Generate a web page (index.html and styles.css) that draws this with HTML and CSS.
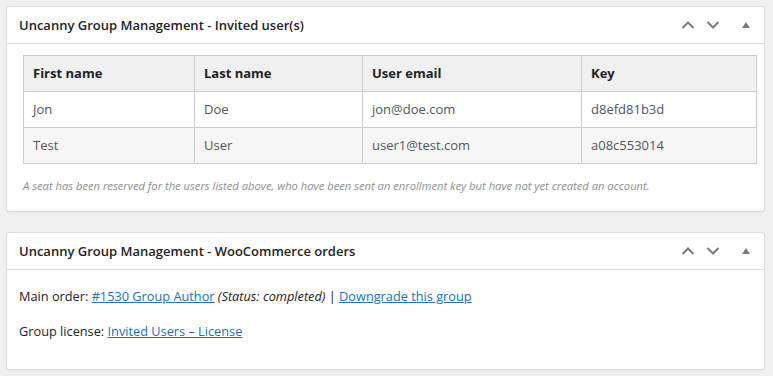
FILE: index.html
```html
<!DOCTYPE html>
<html lang="en">

<head>
    <meta charset="UTF-8">
    <title>Uncanny Group Management</title>
    <link rel="stylesheet" href="styles.css">
</head>

<body>
    <div class="postbox">
        <div class="postbox-header">
            <h2>Uncanny Group Management - Invited user(s)</h2>
            <div class="handle-actions">
                <button class="handle" aria-label="Move up">
                    <svg width="14" height="10" viewBox="0 0 14 10"><polyline points="1.5,8 7,2.5 12.5,8" /></svg>
                </button>
                <button class="handle" aria-label="Move down">
                    <svg width="14" height="10" viewBox="0 0 14 10"><polyline points="1.5,2 7,7.5 12.5,2" /></svg>
                </button>
                <button class="handle toggle" aria-label="Toggle panel">
                    <svg width="10" height="8" viewBox="0 0 10 8"><polygon points="5,1 9,7 1,7" /></svg>
                </button>
            </div>
        </div>
        <div class="inside inside-table">
            <table class="invited">
                <thead>
                    <tr>
                        <th class="col-first">First name</th>
                        <th class="col-last">Last name</th>
                        <th class="col-email">User email</th>
                        <th>Key</th>
                    </tr>
                </thead>
                <tbody>
                    <tr>
                        <td>Jon</td>
                        <td>Doe</td>
                        <td>jon@doe.com</td>
                        <td>d8efd81b3d</td>
                    </tr>
                    <tr class="alt">
                        <td>Test</td>
                        <td>User</td>
                        <td>user1@test.com</td>
                        <td>a08c553014</td>
                    </tr>
                </tbody>
            </table>
            <p class="note">A seat has been reserved for the users listed above, who have been sent an enrollment key but have not yet created an account.</p>
        </div>
    </div>

    <div class="postbox">
        <div class="postbox-header">
            <h2>Uncanny Group Management - WooCommerce orders</h2>
            <div class="handle-actions">
                <button class="handle" aria-label="Move up">
                    <svg width="14" height="10" viewBox="0 0 14 10"><polyline points="1.5,8 7,2.5 12.5,8" /></svg>
                </button>
                <button class="handle" aria-label="Move down">
                    <svg width="14" height="10" viewBox="0 0 14 10"><polyline points="1.5,2 7,7.5 12.5,2" /></svg>
                </button>
                <button class="handle toggle" aria-label="Toggle panel">
                    <svg width="10" height="8" viewBox="0 0 10 8"><polygon points="5,1 9,7 1,7" /></svg>
                </button>
            </div>
        </div>
        <div class="inside inside-orders">
            <p>Main order: <a href="#">#1530 Group Author</a> <em>(Status: completed)</em> | <a href="#">Downgrade this group</a></p>
            <p>Group license: <a href="#">Invited Users – License</a></p>
        </div>
    </div>
</body>

</html>
```

FILE: styles.css
```css
body {
    font-family: 'Open Sans', 'Noto Sans', sans-serif;
    font-size: 13px;
    line-height: 1.4;
    color: #3c434a;
    margin: 0;
    padding: 6px 8px 0 6px;
    background-color: #f0f0f1;
}

.postbox {
    background-color: #fff;
    border: 1px solid #dcdcde;
    border-radius: 3px;
    box-shadow: 0 1px 1px rgba(0, 0, 0, 0.04);
    margin-bottom: 20px;
}

.postbox-header {
    display: flex;
    justify-content: space-between;
    align-items: center;
    height: 36px;
    border-bottom: 1px solid #dcdcde;
}

.postbox-header h2 {
    margin: 0;
    padding-left: 12px;
    font-size: 13px;
    font-weight: 600;
    color: #1d2327;
}

.handle-actions {
    display: flex;
    align-items: center;
    padding-right: 6px;
}

.handle {
    width: 25px;
    height: 36px;
    padding: 0;
    border: none;
    background: none;
    display: flex;
    align-items: center;
    justify-content: center;
}

.handle svg polyline {
    fill: none;
    stroke: #787c82;
    stroke-width: 2;
}

.handle svg polygon {
    fill: #787c82;
}

.handle.toggle {
    margin-left: 8px;
}

.inside-table {
    padding: 11px 7px 17px 16px;
}

.invited {
    width: 100%;
    border-collapse: collapse;
    border: 1px solid #ccc;
}

.invited th,
.invited td {
    border: 1px solid #ccc;
    height: 35px;
    padding: 0 9px;
    text-align: left;
}

.invited th {
    background-color: #f0f0f0;
    font-weight: 700;
    color: #1d2327;
}

.invited td {
    color: #50575e;
}

.invited .alt td {
    background-color: #f6f6f6;
}

.col-first {
    width: 152px;
}

.col-last {
    width: 149px;
}

.col-email {
    width: 200px;
}

.note {
    margin: 14px 0 0;
    font-size: 11.2px;
    font-style: italic;
    color: #8c8f94;
}

.inside-orders {
    padding: 18px 12px 12px;
}

.inside-orders p {
    margin: 0 0 17px;
    font-size: 12.75px;
    color: #1d2327;
}

a {
    color: #2271b1;
}
```
